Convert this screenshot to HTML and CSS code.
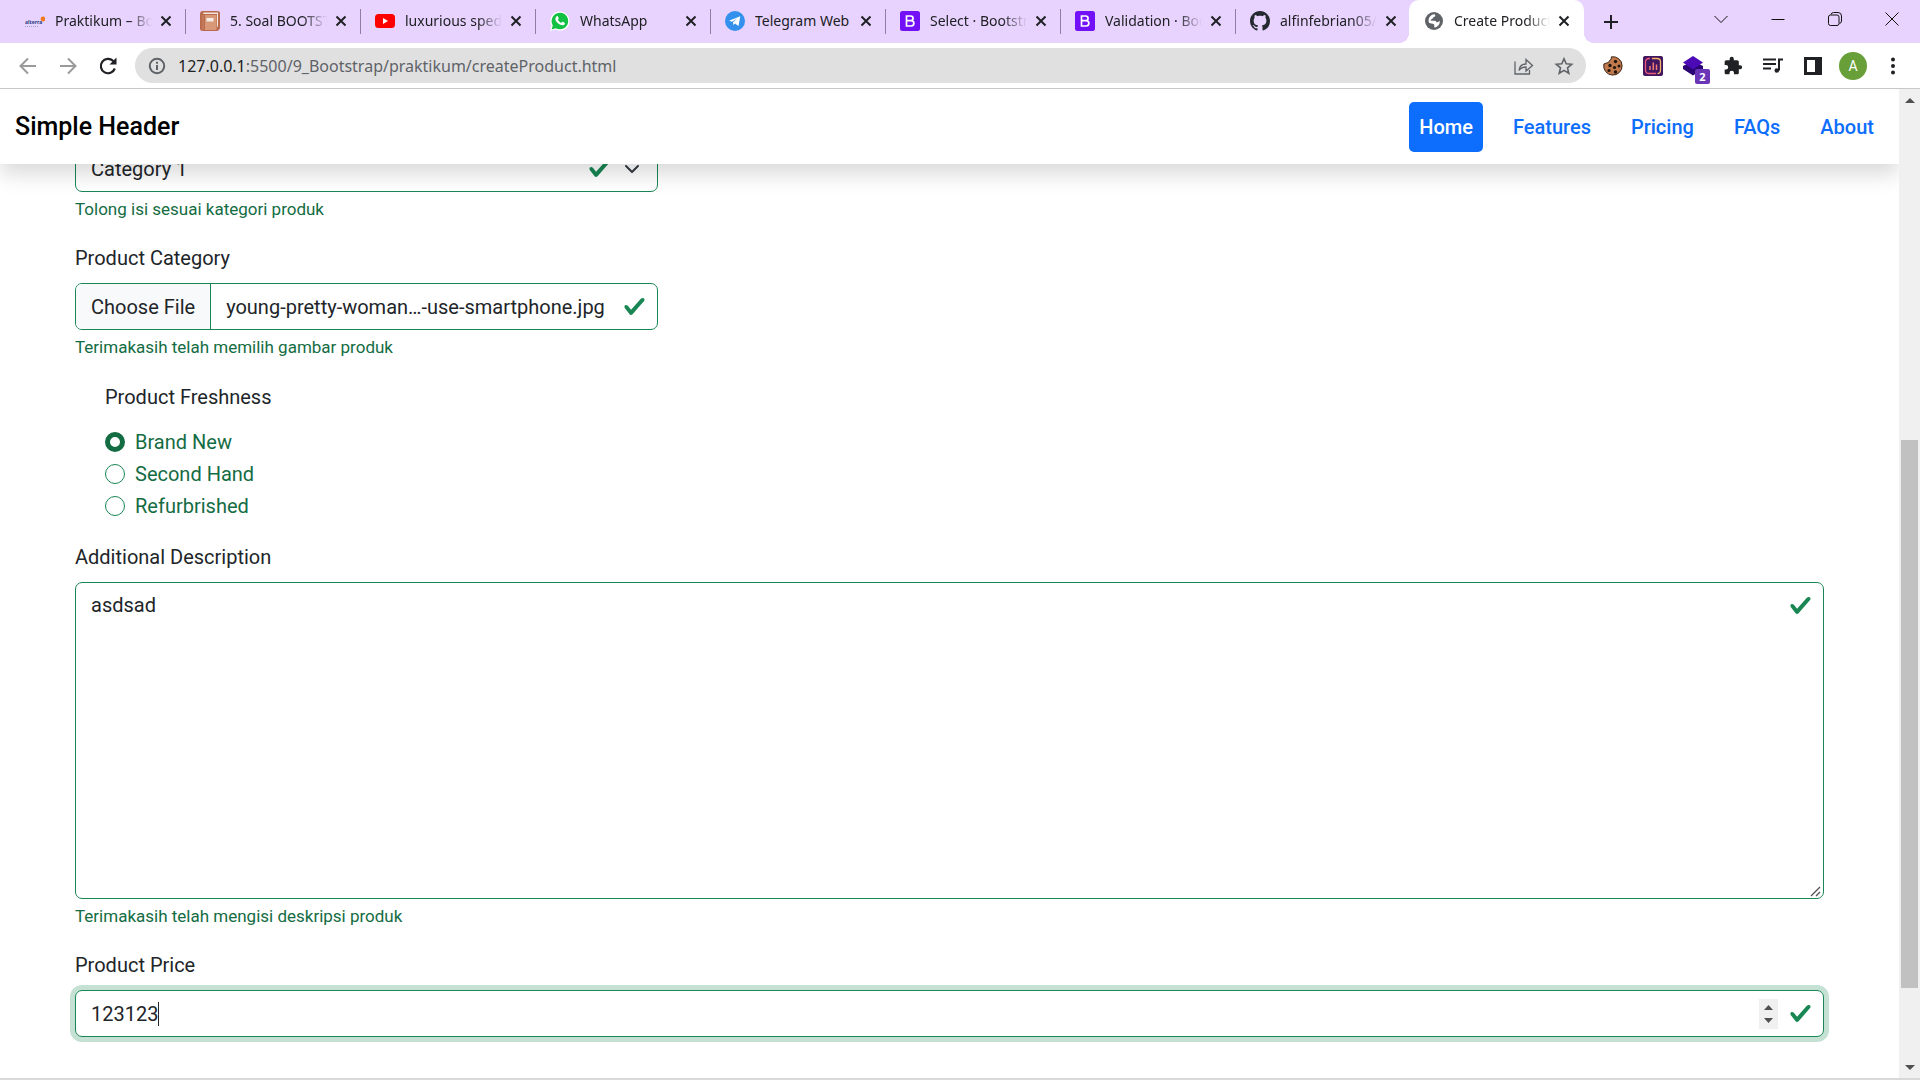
FILE: index.html
```html
<!DOCTYPE html>
<html lang="id">
<head>
<meta charset="utf-8">
<meta name="viewport" content="width=device-width, initial-scale=1">
<title>Create Product</title>
<link rel="stylesheet" href="styles.css">
</head>
<body>
<div class="tabstrip">
  <div class="tab">
    <svg class="favicon" viewBox="0 0 20 20"><text x="0" y="13" class="alterra-text">alterra</text><circle cx="18" cy="8" r="2.4" fill="#f47a20"/><path d="M0 15.500h13" stroke="#9aa3c4" stroke-width="1" stroke-dasharray="1 1"/></svg>
    <span class="tab-title">Praktikum – Bootstrap</span>
    <button class="tab-close" aria-label="Close tab"><svg viewBox="0 0 12 12"><path d="M1.500 1.500l9 9M10.500 1.500l-9 9"/></svg></button>
  </div>
  <div class="tab">
    <svg class="favicon" viewBox="0 0 20 20"><path d="M3 0h14q3 0 3 2v14q0 3-3 4H3q-3 0-3-2.500V3Q0 0 3 0z" fill="#b96a4b"/><path d="M3.500 1.500H18V15l-1 1.500V3H3z" fill="#f3e6de"/><path d="M5 4h11.500v15H5z" fill="#d99877"/><path d="M1.500 4H4v15H2z" fill="#c47a5a"/><rect x="6.500" y="7" width="7" height="3.500" fill="#f3ece8"/></svg>
    <span class="tab-title">5. Soal BOOTSTRAP</span>
    <button class="tab-close" aria-label="Close tab"><svg viewBox="0 0 12 12"><path d="M1.500 1.500l9 9M10.500 1.500l-9 9"/></svg></button>
  </div>
  <div class="tab">
    <svg class="favicon" viewBox="0 0 20 20"><rect y="3" width="20" height="14" rx="3.500" fill="#f00"/><path d="M8 7l5 3-5 3z" fill="#fff"/></svg>
    <span class="tab-title">luxurious sped up</span>
    <button class="tab-close" aria-label="Close tab"><svg viewBox="0 0 12 12"><path d="M1.500 1.500l9 9M10.500 1.500l-9 9"/></svg></button>
  </div>
  <div class="tab">
    <svg class="favicon" viewBox="0 0 20 20"><path d="M0 20l1.500-5.200A9.600 9.600 0 1 1 5.400 18.600z" fill="#fff"/><path d="M1.600 18.400l1.200-4A8.300 8.300 0 1 1 5.800 17.300z" fill="#12c143"/><path d="M6.500 5.400c.5-.5 1.200-.4 1.400.1l.8 1.800c.1.400-.1.700-.8 1.500.7 1.400 1.900 2.500 3.300 3.100.7-.8 1-1.300 1.500-1.100l1.800.9c.7.3.3 1.600-.5 2.200-1 .7-2.600.5-4.200-.3-2.200-1.100-4-3.200-4.400-5.100-.2-1.200.3-2.300 1.100-3.100z" fill="#fff"/></svg>
    <span class="tab-title">WhatsApp</span>
    <button class="tab-close" aria-label="Close tab"><svg viewBox="0 0 12 12"><path d="M1.500 1.500l9 9M10.500 1.500l-9 9"/></svg></button>
  </div>
  <div class="tab">
    <svg class="favicon" viewBox="0 0 20 20"><circle cx="10" cy="10" r="10" fill="#3390ec"/><path d="M4 9.800L15.300 5.300 13.500 15l-3.500-2.600-1.700 1.700-.3-2.800 4.500-4-5.500 3.500z" fill="#fff"/></svg>
    <span class="tab-title tab-title-whole">Telegram Web</span>
    <button class="tab-close" aria-label="Close tab"><svg viewBox="0 0 12 12"><path d="M1.500 1.500l9 9M10.500 1.500l-9 9"/></svg></button>
  </div>
  <div class="tab">
    <svg class="favicon" viewBox="0 0 20 20"><rect width="20" height="20" rx="2.500" fill="#7210f8"/><path d="M6.500 5h4.200a2.300 2.300 0 0 1 0 4.700H6.500zM6.500 9.700h4.700a2.600 2.600 0 0 1 0 5.300H6.500z" fill="none" stroke="#fff" stroke-width="1.700"/></svg>
    <span class="tab-title">Select · Bootstrap v5.2</span>
    <button class="tab-close" aria-label="Close tab"><svg viewBox="0 0 12 12"><path d="M1.500 1.500l9 9M10.500 1.500l-9 9"/></svg></button>
  </div>
  <div class="tab">
    <svg class="favicon" viewBox="0 0 20 20"><rect width="20" height="20" rx="2.500" fill="#7210f8"/><path d="M6.500 5h4.200a2.300 2.300 0 0 1 0 4.700H6.500zM6.500 9.700h4.700a2.600 2.600 0 0 1 0 5.300H6.500z" fill="none" stroke="#fff" stroke-width="1.700"/></svg>
    <span class="tab-title">Validation · Bootstrap</span>
    <button class="tab-close" aria-label="Close tab"><svg viewBox="0 0 12 12"><path d="M1.500 1.500l9 9M10.500 1.500l-9 9"/></svg></button>
  </div>
  <div class="tab tab-last">
    <svg class="favicon" viewBox="0 0 16 16"><path fill="#24292f" d="M8 0C3.580 0 0 3.580 0 8c0 3.540 2.290 6.530 5.470 7.590.4.070.55-.17.55-.38 0-.19-.01-.82-.01-1.490-2.010.37-2.530-.49-2.690-.94-.09-.23-.48-.94-.82-1.130-.28-.15-.68-.52-.01-.53.63-.01 1.080.58 1.230.82.72 1.210 1.870.87 2.330.66.07-.52.28-.87.51-1.070-1.780-.2-3.640-.89-3.640-3.950 0-.87.31-1.590.82-2.150-.08-.2-.36-1.020.08-2.120 0 0 .67-.21 2.200.82.64-.18 1.320-.27 2-.27s1.360.09 2 .27c1.530-1.040 2.200-.82 2.200-.82.44 1.100.16 1.920.08 2.120.51.56.82 1.270.82 2.150 0 3.070-1.870 3.750-3.650 3.950.29.25.54.73.54 1.480 0 1.070-.01 1.930-.01 2.200 0 .21.15.46.55.38A8.010 8.010 0 0 0 16 8c0-4.420-3.580-8-8-8z"/></svg>
    <span class="tab-title">alfinfebrian05/Bootstrap</span>
    <button class="tab-close" aria-label="Close tab"><svg viewBox="0 0 12 12"><path d="M1.500 1.500l9 9M10.500 1.500l-9 9"/></svg></button>
  </div>
  <div class="tab tab-active">
    <svg class="favicon" viewBox="0 0 20 20"><circle cx="10" cy="10" r="9" fill="#5f6368"/><path d="M10.500 3.200c1.500 1.300 1 2.300-.5 2.800-1.700.5-.8 2-2.300 2.200-1.200.1-1.400 1.300-.2 1.600 1.700.2 3.700-.3 4.700.9.900 1.200 2.700.2 3.500-.9.500 3.500-2 6.300-5 6.800-1.200-1.300.3-2.500-.8-3.400-1.300-.8-3.500-.4-4.900-1.500C3.500 7.300 6.300 3.500 10.500 3.200z" fill="#fff"/></svg>
    <span class="tab-title">Create Product</span>
    <button class="tab-close" aria-label="Close tab"><svg viewBox="0 0 12 12"><path d="M1.500 1.500l9 9M10.500 1.500l-9 9"/></svg></button>
  </div>
  <button class="new-tab" aria-label="New tab"><svg viewBox="0 0 16 16"><path d="M8 1v14M1 8h14"/></svg></button>
  <div class="window-controls">
    <button aria-label="Search tabs"><svg viewBox="0 0 14 14"><path d="M.500 4L7 10.500 13.500 4"/></svg></button>
    <button aria-label="Minimize"><svg viewBox="0 0 14 14"><path d="M.500 7.500h13"/></svg></button>
    <button aria-label="Restore"><svg viewBox="0 0 14 14"><rect x=".500" y="3" width="10.500" height="10.500" rx="2"/><path d="M3 2.500Q3.500.500 5.500.500H10Q13.500.500 13.500 4v5q0 2-2 2.500"/></svg></button>
    <button aria-label="Close"><svg viewBox="0 0 14 14"><path d="M.500.500l13 13M13.500.500l-13 13"/></svg></button>
  </div>
</div>
<div class="toolbar">
  <button class="tool tool-dim" aria-label="Back"><svg viewBox="0 0 20 20"><path d="M18 10H3M10 2.500L2.500 10l7.500 7.500"/></svg></button>
  <button class="tool tool-dim" aria-label="Forward"><svg viewBox="0 0 20 20"><path d="M2 10h15M10 2.500l7.500 7.500-7.500 7.500"/></svg></button>
  <button class="tool" aria-label="Reload"><svg viewBox="0 0 20 20"><path d="M16.800 12.500A7.200 7.200 0 1 1 15 4.800l1.500 1.500" stroke-width="2.200"/><path d="M18.500 1.500v7h-7z" fill="#202124" stroke="none"/></svg></button>
  <div class="omnibox">
    <svg class="info" viewBox="0 0 20 20"><circle cx="10" cy="10" r="7.200"/><path d="M10 9v5M10 5.800v2"/></svg>
    <label class="url-host" for="url">127.0.0.1</label>
    <input class="url" id="url" type="text" value=":5500/9_Bootstrap/praktikum/createProduct.html">
    <button class="tool tool-grey" aria-label="Share"><svg viewBox="0 0 20 20"><path d="M1 5.500V18h14.500v-4M5 14.500c.5-4.500 3-6.500 7-6.500v-4.500l6.500 6-6.500 5.500v-4c-3.500 0-5.500 1-7 3.500z" stroke-width="1.300"/></svg></button>
    <button class="tool tool-grey" aria-label="Bookmark"><svg viewBox="0 0 20 20"><path d="M10 2.800l2.200 5 5.500.5-4.200 3.600 1.300 5.400-4.800-2.900-4.800 2.900 1.300-5.400L2.300 8.300l5.500-.5z" stroke-width="1.600"/></svg></button>
  </div>
  <button class="tool" aria-label="Cookie editor"><svg viewBox="0 0 20 20"><path d="M8.500.800q0 3.500-2 3.700-.3 2.700-3 2.500L.900 8A9.200 9.200 0 1 0 8.500.800z" fill="#c17a4e" stroke="#3b2314" stroke-width="1"/><g fill="#20140d" stroke="none"><circle cx="7" cy="9.500" r="1.700"/><circle cx="12.500" cy="5.500" r="1.700"/><circle cx="16" cy="10" r="1.500"/><circle cx="11.500" cy="11.500" r="1.600"/><circle cx="6" cy="14.500" r="1.600"/><circle cx="12.500" cy="16" r="1.700"/></g></svg></button>
  <button class="tool" aria-label="Analytics"><svg viewBox="0 0 20 20"><rect width="20" height="20" rx="2" fill="#401660" stroke="none"/><path d="M7 2.500h-1q-3.500 0-3.500 3.500v8q0 3.500 3.500 3.500h7" stroke="#ef5a7a" stroke-width="1.300"/><path d="M9 2.500h5q3.500 0 3.500 3.500v8q0 3.500-3 3.500" stroke="#f6b56b" stroke-width="1.300"/><path d="M7 10v4M10.300 6.500V14M13.500 8.500V14" stroke="#f47c70" stroke-width="1.500"/></svg></button>
  <button class="tool tool-badged" aria-label="Layers"><svg viewBox="0 0 20 20"><path d="M0 10l10-5 10 5v3l-10 6.500L0 13z" fill="#2a0573" stroke="none"/><path d="M10 0l10 6.500L10 13.500 0 6.500z" fill="#4b0ab5" stroke="none"/></svg><span class="badge">2</span></button>
  <button class="tool" aria-label="Extensions"><svg viewBox="0 0 24 24"><path fill="#202124" stroke="none" d="M20.500 11H19V7c0-1.100-.9-2-2-2h-4V3.500a2.500 2.500 0 0 0-5 0V5H4c-1.100 0-2 .9-2 2v3.800h1.500a2.700 2.700 0 0 1 0 5.400H2V20c0 1.100.9 2 2 2h3.800v-1.500a2.700 2.700 0 0 1 5.400 0V22H17c1.100 0 2-.9 2-2v-4h1.500a2.500 2.500 0 0 0 0-5z"/></svg></button>
  <button class="tool" aria-label="Media"><svg viewBox="0 0 20 20"><path d="M0 3.500h13M0 8h13M0 12.500h8M20 3.500h-4v11"/><circle cx="13.800" cy="14.500" r="2.300" fill="#202124" stroke="none"/></svg></button>
  <button class="tool" aria-label="Side panel"><svg viewBox="0 0 20 20"><path fill="#202124" stroke="none" fill-rule="evenodd" d="M1 1h18v18H1zM4 4v12h8V4z"/></svg></button>
  <button class="tool" aria-label="Profile"><span class="avatar">A</span></button>
  <button class="tool" aria-label="Menu"><svg viewBox="0 0 20 20"><g fill="#202124" stroke="none"><circle cx="10" cy="3.500" r="2"/><circle cx="10" cy="10" r="2"/><circle cx="10" cy="16.500" r="2"/></g></svg></button>
</div>
<div class="viewport">
  <div class="page">
    <header class="site-header">
      <a class="brand" href="#">Simple Header</a>
      <nav class="site-nav">
        <a class="nav-link nav-link-active" href="#">Home</a>
        <a class="nav-link" href="#">Features</a>
        <a class="nav-link" href="#">Pricing</a>
        <a class="nav-link" href="#">FAQs</a>
        <a class="nav-link" href="#">About</a>
      </nav>
    </header>
    <main>
      <form class="product-form">
        <div class="field field-third field-scrolled">
          <select class="control control-select" aria-label="Category"><option>Category 1</option></select>
          <p class="feedback">Tolong isi sesuai kategori produk</p>
        </div>
        <div class="field field-third">
          <label class="label" for="image">Product Category</label>
          <input class="control control-file" type="file" id="image">
          <p class="feedback">Terimakasih telah memilih gambar produk</p>
        </div>
        <fieldset class="freshness">
          <legend class="label">Product Freshness</legend>
          <label class="radio"><input type="radio" name="freshness" checked>Brand New</label>
          <label class="radio"><input type="radio" name="freshness">Second Hand</label>
          <label class="radio"><input type="radio" name="freshness">Refurbrished</label>
        </fieldset>
        <div class="field">
          <label class="label" for="description">Additional Description</label>
          <textarea class="control control-area" id="description" rows="10">asdsad</textarea>
          <p class="feedback">Terimakasih telah mengisi deskripsi produk</p>
        </div>
        <div class="field">
          <label class="label" for="price">Product Price</label>
          <input class="control control-number" type="number" id="price" value="123123" autofocus>
        </div>
      </form>
    </main>
  </div>
  <div class="scrollbar" aria-hidden="true">
    <div class="scroll-arrow scroll-up"></div>
    <div class="scroll-before"></div>
    <div class="scroll-thumb"></div>
    <div class="scroll-after"></div>
    <div class="scroll-arrow scroll-down"></div>
  </div>
</div>
<script src="script.js"></script>
</body>
</html>
```
FILE: styles.css
```css
* { box-sizing: border-box; }
body {
  margin: 0;
  min-height: 100vh;
  display: flex;
  flex-direction: column;
  font-family: Roboto, "Liberation Sans", sans-serif;
  font-size: 20px;
  line-height: 30px;
  color: #212529;
  background: #fff;
  border-bottom: 2px solid #d9d9d9;
  overflow: hidden;
}
button {
  padding: 0;
  border: 0;
  background: none;
  font: inherit;
  color: inherit;
}
svg { display: block; }

/* Tab strip */
.tabstrip {
  display: flex;
  height: 43px;
  padding-left: 11px;
  background: #e8d3ff;
  font-family: "Noto Sans", "Open Sans", sans-serif;
  font-size: 14px;
  line-height: 20px;
  color: #202124;
}
.tab {
  flex: 0 1 175px;
  min-width: 0;
  display: flex;
  align-items: center;
  padding: 0 14px 2px 14px;
  background: linear-gradient(#8f7fa3, #8f7fa3) right 9px / 1px 25px no-repeat;
}
.tab-last {
  flex-basis: 173px;
  padding-right: 12px;
  background: none;
}
.tab-active {
  position: relative;
  padding-left: 15px;
  background: #fff;
  border-radius: 10px 10px 0 0;
}
.tab-active::before,
.tab-active::after {
  content: "";
  position: absolute;
  bottom: 0;
  width: 10px;
  height: 10px;
}
.tab-active::before {
  right: 100%;
  background: radial-gradient(circle at 0 0, transparent 10px, #fff 10px);
}
.tab-active::after {
  left: 100%;
  background: radial-gradient(circle at 100% 0, transparent 10px, #fff 10px);
}
.favicon {
  flex: none;
  width: 20px;
  height: 20px;
}
.alterra-text {
  font: bold 5px "Open Sans", sans-serif;
  fill: #243a7a;
}
.tab-title {
  flex: 1;
  min-width: 0;
  margin: 0 8px 0 10px;
  overflow: hidden;
  white-space: nowrap;
  mask-image: linear-gradient(90deg, #000 75%, transparent);
}
.tab-title-whole { mask-image: none; }
.tab-close {
  flex: none;
  width: 12px;
  height: 12px;
}
.tab-close svg,
.new-tab svg {
  width: 100%;
  fill: none;
  stroke: #202124;
  stroke-width: 2;
}
.new-tab {
  width: 16px;
  margin-left: 19px;
}
.window-controls {
  display: flex;
  height: 37px;
  margin-left: auto;
}
.window-controls button {
  width: 57px;
  display: grid;
  place-items: center;
}
.window-controls svg {
  width: 14px;
  height: 14px;
  fill: none;
  stroke: #111;
  stroke-width: 1;
}

/* Toolbar */
.toolbar {
  display: flex;
  align-items: center;
  height: 46px;
  padding: 0 7px 0 8px;
  border-bottom: 1px solid #c8c8c8;
}
.tool {
  flex: none;
  width: 40px;
  height: 34px;
  display: grid;
  place-items: center;
}
.tool svg {
  width: 20px;
  height: 20px;
  fill: none;
  stroke: #202124;
  stroke-width: 2;
}
.tool-dim svg { stroke: #9a9a9a; }
.tool-grey svg { stroke: #5f6368; }
.tool-badged { position: relative; }
.badge {
  position: absolute;
  right: 3px;
  bottom: -1px;
  width: 15px;
  height: 15px;
  border-radius: 2px;
  background: #6b35b8;
  color: #fff;
  font: bold 11px/15px "Open Sans", sans-serif;
}
.avatar {
  width: 28px;
  height: 28px;
  border-radius: 50%;
  background: #689f38;
  color: #fff;
  font-size: 14px;
  line-height: 28px;
}
.omnibox {
  flex: 1;
  min-width: 0;
  display: flex;
  align-items: center;
  height: 35px;
  margin: 0 7px;
  padding: 0 2px 0 12px;
  border-radius: 18px;
  background: #e0e0e0;
  font-family: "Noto Sans", "Open Sans", sans-serif;
  font-size: 16px;
  line-height: 24px;
}
.info {
  flex: none;
  width: 20px;
  height: 20px;
  margin-right: 11px;
  fill: none;
  stroke: #5f6368;
  stroke-width: 2;
}
.url-host { color: #202124; }
.url {
  flex: 1;
  min-width: 0;
  padding: 0;
  border: 0;
  background: none;
  font: inherit;
  color: #5f6368;
}

/* Page area */
.viewport {
  flex: 1;
  display: grid;
  grid-template-columns: minmax(0, 1fr) 21px;
}
.page { overflow: hidden; }
.site-header {
  position: relative;
  z-index: 1;
  display: flex;
  align-items: center;
  justify-content: space-between;
  height: 75px;
  padding: 0 15px;
  background: #fff;
  box-shadow: 0 10px 20px rgba(0, 0, 0, 0.15);
}
.brand {
  color: #000;
  font-size: 25px;
  font-weight: 500;
  text-decoration: none;
}
.site-nav {
  display: flex;
  gap: 20px;
}
.nav-link {
  padding: 10px;
  border-radius: 5px;
  color: #0d6efd;
  font-weight: 500;
  text-decoration: none;
}
.nav-link-active {
  background: #0d6efd;
  color: #fff;
}

/* Form */
.product-form {
  display: flex;
  flex-direction: column;
  gap: 20px;
  padding: 0 75px 40px;
}
.field {
  display: flex;
  flex-direction: column;
}
.field-third { width: calc(100% / 3); }
.field-scrolled { margin-top: -19px; }
.label {
  margin-bottom: 10px;
  padding: 0;
}
.feedback {
  margin: 4px 0 0;
  padding-bottom: 1px;
  font-size: 17px;
  line-height: 26px;
  color: #146c43;
}
.control {
  width: 100%;
  height: 47px;
  margin: 0;
  padding: 8px 15px;
  border: 1px solid #198754;
  border-radius: 7px;
  outline: 0;
  background: #fff url("data:image/svg+xml,%3Csvg xmlns='http://www.w3.org/2000/svg' viewBox='0 0 8 8'%3E%3Cpath fill='%23198754' d='M2.3 6.73.6 4.53c-.4-1.04.46-1.4 1.1-.8l1.1 1.4 3.4-3.8c.6-.63 1.6-.27 1.2.7l-4 4.6c-.43.5-.8.4-1.1.1z'/%3E%3C/svg%3E") right 11px center / 23px 23px no-repeat;
  font: inherit;
  color: #212529;
}
.control-select {
  appearance: none;
  background-image:
    url("data:image/svg+xml,%3Csvg xmlns='http://www.w3.org/2000/svg' viewBox='0 0 16 16'%3E%3Cpath fill='none' stroke='%23343a40' stroke-linecap='round' stroke-linejoin='round' stroke-width='2' d='m2 5 6 6 6-6'/%3E%3C/svg%3E"),
    url("data:image/svg+xml,%3Csvg xmlns='http://www.w3.org/2000/svg' viewBox='0 0 8 8'%3E%3Cpath fill='%23198754' d='M2.3 6.73.6 4.53c-.4-1.04.46-1.4 1.1-.8l1.1 1.4 3.4-3.8c.6-.63 1.6-.27 1.2.7l-4 4.6c-.43.5-.8.4-1.1.1z'/%3E%3C/svg%3E");
  background-position: right 17px center, right 46px center;
  background-size: 16px 16px, 23px 23px;
}
.control-file { padding-right: 45px; overflow: hidden; }
.control-file::file-selector-button {
  margin: -8px 15px -8px -15px;
  padding: 8px 15px;
  border: 0 solid #198754;
  border-right-width: 1px;
  border-radius: 0;
  background: #f8f9fa;
  font: inherit;
  color: #212529;
}
.control-area {
  display: block;
  height: auto;
  padding: 7px 45px 8px 15px;
  background-position: right 11px top 11px;
  resize: vertical;
}
.control-area::-webkit-resizer {
  background: url("data:image/svg+xml,%3Csvg xmlns='http://www.w3.org/2000/svg' viewBox='0 0 15 15'%3E%3Cpath fill='none' stroke='%23505050' stroke-width='1.3' d='M3 13l9-9M8 13l4-4'/%3E%3C/svg%3E") center / 15px 15px no-repeat;
}
.control-number { padding-right: 45px; }
.control-number::-webkit-inner-spin-button {
  appearance: none;
  width: 19px;
  height: 30px;
  opacity: 1;
  background: #f0f0f0 url("data:image/svg+xml,%3Csvg xmlns='http://www.w3.org/2000/svg' viewBox='0 0 19 30'%3E%3Cpath fill='%23505050' d='M5 11l4.500-5 4.500 5zM5 19l4.500 5 4.500-5z'/%3E%3C/svg%3E") center / 19px 30px no-repeat;
}
.control-number:focus {
  /* text cursor after the sixth digit, beside the valid mark */
  background-image:
    linear-gradient(#212529, #212529),
    url("data:image/svg+xml,%3Csvg xmlns='http://www.w3.org/2000/svg' viewBox='0 0 8 8'%3E%3Cpath fill='%23198754' d='M2.3 6.73.6 4.53c-.4-1.04.46-1.4 1.1-.8l1.1 1.4 3.4-3.8c.6-.63 1.6-.27 1.2.7l-4 4.6c-.43.5-.8.4-1.1.1z'/%3E%3C/svg%3E");
  background-position: left 82px center, right 11px center;
  background-size: 1px 24px, 23px 23px;
  caret-color: transparent;
  box-shadow: 0 0 0 5px rgba(25, 135, 84, 0.25);
}

.freshness {
  min-width: 0;
  margin: 0;
  padding: 0 0 1px 30px;
  border: 0;
}
.freshness .label {
  margin-bottom: 15px;
  padding-top: 1px;
}
.radio {
  display: flex;
  align-items: center;
  gap: 10px;
  color: #146c43;
}
.radio + .radio { margin-top: 2px; }
.radio input {
  appearance: none;
  width: 20px;
  height: 20px;
  margin: 0;
  border: 1px solid #198754;
  border-radius: 50%;
  background: #fff;
}
.radio input:checked { border: 5px solid #146c43; }

/* Scrollbar */
.scrollbar {
  display: flex;
  flex-direction: column;
  padding: 0 2px;
  background: #f0f0f0;
}
.scroll-arrow {
  height: 22px;
  display: grid;
  place-items: center;
}
.scroll-arrow::before {
  content: "";
  border: 5px solid transparent;
}
.scroll-up::before { border-top: 0; border-bottom-color: #505050; }
.scroll-down::before { border-bottom: 0; border-top-color: #505050; }
.scroll-before { flex: 329; }
.scroll-thumb { flex: 548; background: #c1c1c1; }
.scroll-after { flex: 68; }
```
FILE: script.js
```js
// The file chosen for the product picture.
const chosen = new DataTransfer();
chosen.items.add(new File([""], "young-pretty-woman\u2026-use-smartphone.jpg"));
document.getElementById("image").files = chosen.files;
document.getElementById("price").focus();
```
